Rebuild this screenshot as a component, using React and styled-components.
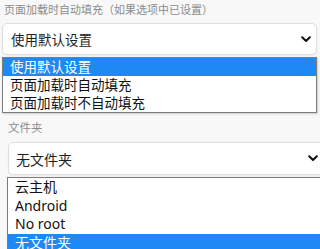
import React from "react";
import styled, { createGlobalStyle } from "styled-components";

const GlobalStyle = createGlobalStyle`
  html, body {
    margin: 0;
    padding: 0;
    background: #f8f8f8;
    overflow: hidden;
  }
  body {
    font-family: "Noto Sans", "Noto Sans CJK SC", sans-serif;
  }
`;

const fields = [
  {
    label: "页面加载时自动填充（如果选项中已设置）",
    value: "使用默认设置",
    options: ["使用默认设置", "页面加载时自动填充", "页面加载时不自动填充"],
    selected: 0,
  },
  {
    label: "文件夹",
    value: "无文件夹",
    options: ["云主机", "Android", "No root", "无文件夹"],
    selected: 3,
  },
];

const Chevron = () => (
  <svg width="10" height="7" viewBox="0 0 10 7">
    <polyline
      points="1.2,1.2 5,5 8.8,1.2"
      fill="none"
      stroke="#111"
      strokeWidth="2"
      strokeLinecap="round"
      strokeLinejoin="round"
    />
  </svg>
);

// one labelled select with its open option list
const Dropdown = ({ field, big }) => (
  <Field $big={big}>
    <Label $big={big}>{field.label}</Label>
    <Select $big={big}>
      <span>{field.value}</span>
      <Chevron />
    </Select>
    <List>
      {field.options.map((o, i) => (
        <Option key={o} $big={big} $active={i === field.selected}>
          {o}
        </Option>
      ))}
    </List>
  </Field>
);

const App = () => {
  return (
    <>
      <GlobalStyle />
      <Page>
        <Dropdown field={fields[0]} big={false} />
        <Dropdown field={fields[1]} big />
      </Page>
    </>
  );
};

export default App;

const Page = styled.div`
  display: flex;
  flex-direction: column;
  width: 320px;
  height: 249px;
  overflow: hidden;
`;

const Field = styled.div`
  display: flex;
  flex-direction: column;
  padding-left: ${(p) => (p.$big ? "7px" : "2px")};
  padding-top: ${(p) => (p.$big ? "7px" : "2px")};
  width: ${(p) => (p.$big ? "320px" : "315px")};
  flex-shrink: 0;
`;

const Label = styled.div`
  font-size: ${(p) => (p.$big ? "11.5px" : "11px")};
  line-height: 16px;
  color: #8c8c8c;
  padding-left: ${(p) => (p.$big ? "1px" : "2px")};
  white-space: nowrap;
`;

const Select = styled.div`
  display: flex;
  align-items: center;
  justify-content: space-between;
  box-sizing: border-box;
  height: ${(p) => (p.$big ? "33px" : "32px")};
  margin-top: ${(p) => (p.$big ? "6px" : "5px")};
  margin-left: ${(p) => (p.$big ? "1px" : "0")};
  padding: ${(p) => (p.$big ? "0 8px 0 7px" : "0 5px 0 8px")};
  background: #ffffff;
  border: 1px solid #dedede;
  border-radius: 5px;
  box-shadow: 0 1px 2px rgba(0, 0, 0, 0.06);
  font-size: ${(p) => (p.$big ? "14px" : "13.5px")};
  color: #1e1e1e;
  white-space: nowrap;
`;

const List = styled.div`
  display: flex;
  flex-direction: column;
  margin-top: 2px;
  background: #ffffff;
  border: 1px solid #7c7c7c;
  box-shadow: 1px 1px 2px rgba(0, 0, 0, 0.18);
`;

const Option = styled.div`
  height: ${(p) => (p.$big ? "18.5px" : "18px")};
  line-height: ${(p) => (p.$big ? "18.5px" : "18px")};
  padding-left: 7px;
  font-size: ${(p) => (p.$big ? "14px" : "13.5px")};
  color: ${(p) => (p.$active ? "#ffffff" : "#111111")};
  background: ${(p) => (p.$active ? "#1e88f5" : "transparent")};
  white-space: nowrap;
`;
